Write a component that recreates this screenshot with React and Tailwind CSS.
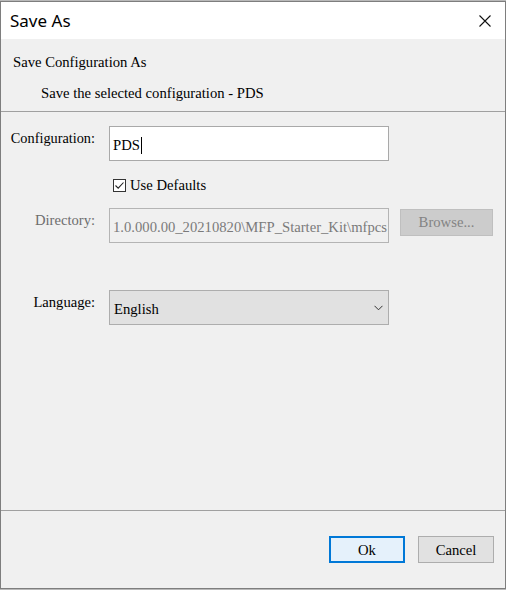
import React from "react";

const serif = { fontFamily: '"Liberation Serif", "Times New Roman", serif' };

export default function App() {
  return (
    <div className="w-[506px] h-[590px] bg-[#b9b9b9] relative overflow-hidden">
      <div className="absolute left-0 top-[1px] w-[506px] h-[588px] border border-[#7e7e7e] bg-[#f0f0f0] flex flex-col" style={serif}>
        {/* title bar */}
        <div className="h-[37px] bg-white flex items-center justify-between shrink-0">
          <span className="pl-[9px] text-[17px] text-black leading-none" style={{ fontFamily: '"Noto Sans", "Open Sans", sans-serif' }}>
            Save As
          </span>
          <svg width="12" height="12" viewBox="0 0 12 12" className="mr-[14px]">
            <path d="M0.5 0.5 L11.5 11.5 M11.5 0.5 L0.5 11.5" stroke="#111" strokeWidth="1.1" fill="none" />
          </svg>
        </div>
        {/* header */}
        <div className="h-[72px] shrink-0 text-[14.67px] text-black leading-none">
          <div className="pl-[12px] pt-[16px]">Save Configuration As</div>
          <div className="pl-[40px] pt-[16px]">Save the selected configuration - PDS</div>
        </div>
        <div className="h-px bg-[#a0a0a0] shrink-0" />
        {/* form */}
        <div className="flex-1 pt-[14px] text-[14.67px] leading-none">
          <div className="flex items-start">
            <div className="w-[94px] text-right pt-[5px] text-black text-[14.3px]">Configuration:</div>
            <div className="ml-[14px] w-[280px] h-[35px] bg-white border border-[#a9a9a9] flex items-center pl-[3px] pt-[3px]">
              <span className="text-black">PDS</span>
              <span className="w-px h-[17px] bg-black ml-[1px]" />
            </div>
          </div>
          <div className="flex items-center ml-[112px] mt-[17px] h-[14px]">
            <div className="w-[13px] h-[13px] border border-[#333] bg-white flex items-center justify-center">
              <svg width="11" height="11" viewBox="0 0 11 11">
                <path d="M1.5 5.5 L4.2 8.2 L9.5 2.5" stroke="#222" strokeWidth="1.1" fill="none" />
              </svg>
            </div>
            <span className="ml-[4px] text-black">Use Defaults</span>
          </div>
          <div className="flex items-start mt-[16px]">
            <div className="w-[94px] text-right pt-[5px] text-[#6d6d6d] text-[14.6px]">Directory:</div>
            <div className="ml-[14px] w-[280px] h-[35px] bg-[#f0f0f0] border border-[#b4b4b4] flex items-center pl-[3px] pt-[3px] overflow-hidden whitespace-nowrap">
              <span className="text-[#7a7a7a]">1.0.000.00_20210820\MFP_Starter_Kit\mfpcs</span>
            </div>
            <div className="ml-[11px] mt-[1px] w-[93px] h-[27px] bg-[#cccccc] border border-[#bfbfbf] flex items-center justify-center text-[#838383]">
              Browse...
            </div>
          </div>
          <div className="flex items-start mt-[47px]">
            <div className="w-[94px] text-right pt-[5px] text-black text-[14.6px]">Language:</div>
            <div className="ml-[14px] w-[280px] h-[35px] bg-[#e1e1e1] border border-[#adadad] flex items-center justify-between pl-[4px] pr-[5px] pt-[3px]">
              <span className="text-black">English</span>
              <svg width="9" height="6" viewBox="0 0 9 6" className="-mt-[3px]">
                <path d="M0.5 0.8 L4.5 4.8 L8.5 0.8" stroke="#333" strokeWidth="1" fill="none" />
              </svg>
            </div>
          </div>
        </div>
        <div className="h-px bg-[#a0a0a0] shrink-0" />
        {/* footer */}
        <div className="h-[77px] shrink-0 flex justify-end items-start pt-[25px] pr-[11px] gap-[13px] text-[14.67px] leading-none">
          <div className="w-[76px] h-[27px] bg-[#e5f1fb] border-[2px] border-[#0078d7] flex items-center justify-center text-black pt-[1px]">Ok</div>
          <div className="w-[76px] h-[27px] bg-[#e1e1e1] border border-[#adadad] flex items-center justify-center text-black pt-[1px]">Cancel</div>
        </div>
      </div>
    </div>
  );
}
